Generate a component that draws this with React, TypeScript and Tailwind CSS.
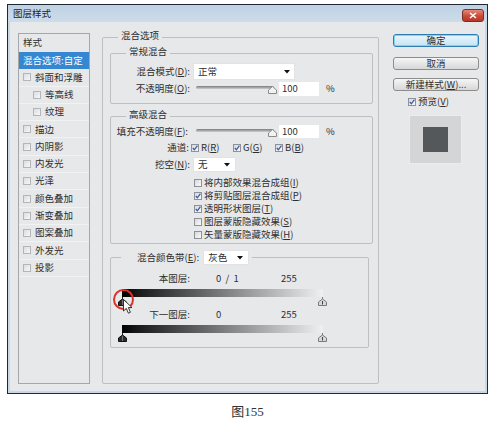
import React from "react";

function Chk({ on = false }: { on?: boolean }) {
  return (
    <span className="relative inline-block w-[8px] h-[8px] shrink-0 border border-[#8e9196] bg-[linear-gradient(135deg,#d6d8db,#fbfbfb)]">
      {on && (
        <svg viewBox="0 0 6 6" className="absolute left-0 top-0 w-[6px] h-[6px]">
          <path d="M0.8 3 L2.4 4.8 L5.4 0.6" stroke="#3a5fa6" strokeWidth="1.3" fill="none" />
        </svg>
      )}
    </span>
  );
}

function ListChk() {
  return (
    <span className="inline-block w-[8px] h-[8px] shrink-0 border border-[#b3b5b8] bg-[linear-gradient(135deg,#dcdde0,#f7f7f8)]" />
  );
}

function Arrow() {
  return (
    <svg width="6" height="4" viewBox="0 0 6 4" className="shrink-0">
      <path d="M0 0 L6 0 L3 3.5 Z" fill="#111" />
    </svg>
  );
}

function Slider() {
  return (
    <div className="relative w-[81px] h-[10px] shrink-0">
      <div className="absolute left-0 right-[3px] top-[2px] h-[3px] rounded-full bg-[linear-gradient(to_bottom,#7b7b7b,#cfcfcf)]" />
      <svg className="absolute right-0 top-[2px]" width="9" height="8" viewBox="0 0 9 8">
        <path d="M4.5 0.5 L8.5 4 L8.5 7.5 L0.5 7.5 L0.5 4 Z" fill="#f2f2f2" stroke="#8a8a8a" />
      </svg>
    </div>
  );
}

function ThumbDark() {
  return (
    <svg width="9" height="9" viewBox="0 0 9 9" className="shrink-0">
      <line x1="4.5" y1="0" x2="4.5" y2="2" stroke="#222" />
      <path d="M4.5 2 L8.5 5 L8.5 8.5 L0.5 8.5 L0.5 5 Z" fill="#2a2a2a" stroke="#111" />
      <line x1="4.5" y1="3" x2="4.5" y2="8" stroke="#777" />
    </svg>
  );
}

function ThumbLight() {
  return (
    <svg width="9" height="9" viewBox="0 0 9 9" className="shrink-0">
      <line x1="4.5" y1="0" x2="4.5" y2="2" stroke="#777" />
      <path d="M4.5 2 L8.5 5 L8.5 8.5 L0.5 8.5 L0.5 5 Z" fill="#d8d8d8" stroke="#7a7a7a" />
      <line x1="4.5" y1="4" x2="4.5" y2="7.5" stroke="#444" />
    </svg>
  );
}

const listItems: { t: string; lvl: number }[] = [
  { t: "斜面和浮雕", lvl: 1 },
  { t: "等高线", lvl: 2 },
  { t: "纹理", lvl: 2 },
  { t: "描边", lvl: 1 },
  { t: "内阴影", lvl: 1 },
  { t: "内发光", lvl: 1 },
  { t: "光泽", lvl: 1 },
  { t: "颜色叠加", lvl: 1 },
  { t: "渐变叠加", lvl: 1 },
  { t: "图案叠加", lvl: 1 },
  { t: "外发光", lvl: 1 },
  { t: "投影", lvl: 1 },
];

const checks: { t: string; k: string; on: boolean }[] = [
  { t: "将内部效果混合成组(", k: "I", on: false },
  { t: "将剪贴图层混合成组(", k: "P", on: true },
  { t: "透明形状图层(", k: "T", on: true },
  { t: "图层蒙版隐藏效果(", k: "S", on: false },
  { t: "矢量蒙版隐藏效果(", k: "H", on: false },
];

export default function App() {
  return (
    <div className="w-[495px] h-[423px] bg-white overflow-hidden pt-[4px] pl-[7px] font-['Noto_Sans_CJK_SC','Noto_Sans',sans-serif] text-[9.5px] text-[#2e2e2e]">
      {/* window */}
      <div className="w-[481px] h-[390px] border border-[#1d2a34] bg-[#c8d8e7] flex flex-col">
        {/* title bar */}
        <div className="h-[17px] shrink-0 flex items-center pl-[5px] pr-[3px] bg-[linear-gradient(to_bottom,#bfd1e3,#cddcea)]">
          <span className="leading-none text-[#222]">图层样式</span>
          <div className="ml-auto mt-[3px] w-[22px] h-[13px] rounded-[3px] border border-[#7c2e25] bg-[linear-gradient(to_bottom,#e48a78,#c94a36_55%,#b8382a)] flex items-center justify-center">
            <svg width="8" height="7" viewBox="0 0 8 7">
              <path d="M1 1 L7 6 M7 1 L1 6" stroke="#fff" strokeWidth="1.6" />
            </svg>
          </div>
        </div>
        {/* body */}
        <div className="flex-1 mx-[2px] mb-[2px] bg-[#e7e8ea] flex items-start">
          {/* style list */}
          <div className="ml-[8px] mt-[11px] w-[72px] h-[351px] border border-[#a4a7ab] flex flex-col">
            <div className="h-[18px] flex items-center pl-[4px] leading-none">样式</div>
            <div className="h-[17.3px] flex items-center pl-[4px] bg-[#3587d2] text-white leading-none">混合选项:自定</div>
            {listItems.map((it) => (
              <div
                key={it.t}
                className={
                  it.lvl === 1
                    ? "h-[17.3px] flex items-center pl-[4px] gap-[4px] border-b border-[#f1f2f3] leading-none"
                    : "h-[17.3px] flex items-center pl-[14px] gap-[4px] border-b border-[#f1f2f3] leading-none"
                }
              >
                <ListChk />
                <span>{it.t}</span>
              </div>
            ))}
          </div>

          {/* main group */}
          <fieldset className="ml-[12px] mt-[7px] w-[277px] h-[355px] border border-[#bcbfc3] rounded-[2px]">
            <legend className="ml-[15px] px-[3px] leading-[12px] pb-[4px]">混合选项</legend>

            {/* 常规混合 */}
            <fieldset className="ml-[7px] w-[263px] border border-[#bcbfc3] rounded-[2px] pb-[6px]">
              <legend className="ml-[15px] px-[3px] leading-[12px] pb-[4px]">常规混合</legend>
              <div className="mt-[2px] h-[17px] flex items-center">
                <span className="w-[79px] text-right leading-none">
                  混合模式(<span className="underline">D</span>):
                </span>
                <div className="ml-[3px] w-[102px] h-[17px] bg-white border border-[#e2e3e5] flex items-center pl-[4px] pr-[4px] leading-none">
                  <span>正常</span>
                  <span className="ml-auto">
                    <Arrow />
                  </span>
                </div>
              </div>
              <div className="mt-[1px] h-[16px] flex items-center">
                <span className="w-[79px] text-right leading-none">
                  不透明度(<span className="underline">O</span>):
                </span>
                <div className="ml-[6px]">
                  <Slider />
                </div>
                <div className="ml-[2px] w-[40px] h-[14px] bg-white flex items-center pl-[3px] leading-none">100</div>
                <span className="ml-[7px] leading-none">%</span>
              </div>
            </fieldset>

            {/* 高级混合 */}
            <fieldset className="mt-[4px] ml-[7px] w-[263px] border border-[#bcbfc3] rounded-[2px] pb-[2px]">
              <legend className="ml-[15px] px-[3px] leading-[12px] pb-[4px]">高级混合</legend>
              <div className="h-[15px] flex items-center">
                <span className="w-[77px] text-right leading-none">
                  填充不透明度(<span className="underline">F</span>):
                </span>
                <div className="ml-[8px]">
                  <Slider />
                </div>
                <div className="ml-[2px] w-[40px] h-[13px] bg-white flex items-center pl-[3px] leading-none">100</div>
                <span className="ml-[7px] leading-none">%</span>
              </div>
              <div className="mt-[2px] h-[14px] flex items-center">
                <span className="w-[78px] text-right leading-none">通道:</span>
                <div className="ml-[2px] w-[42px] flex items-center gap-[2px] leading-none">
                  <Chk on />
                  <span>
                    R(<span className="underline">R</span>)
                  </span>
                </div>
                <div className="w-[42px] flex items-center gap-[2px] leading-none">
                  <Chk on />
                  <span>
                    G(<span className="underline">G</span>)
                  </span>
                </div>
                <div className="flex items-center gap-[2px] leading-none">
                  <Chk on />
                  <span>
                    B(<span className="underline">B</span>)
                  </span>
                </div>
              </div>
              <div className="mt-[2px] h-[15px] flex items-center">
                <span className="w-[79px] text-right leading-none">
                  挖空(<span className="underline">N</span>):
                </span>
                <div className="ml-[3px] w-[43px] h-[15px] bg-white border border-[#e2e3e5] flex items-center pl-[4px] pr-[5px] leading-none">
                  <span>无</span>
                  <span className="ml-auto">
                    <Arrow />
                  </span>
                </div>
              </div>
              <div className="mt-[4px] flex flex-col">
                {checks.map((c) => (
                  <div key={c.k} className="h-[13px] pl-[83px] flex items-center gap-[2px] leading-none">
                    <Chk on={c.on} />
                    <span>
                      {c.t}
                      <span className="underline">{c.k}</span>)
                    </span>
                  </div>
                ))}
              </div>
            </fieldset>

            {/* 混合颜色带 */}
            <fieldset className="mt-[6px] ml-[7px] w-[259px] border border-[#bcbfc3] rounded-[2px] pb-[5px]">
              <legend className="ml-[10px] pl-[16px] pr-[3px]">
                <div className="h-[15px] flex items-center leading-none">
                  <span>
                    混合颜色带(<span className="underline">E</span>):
                  </span>
                  <div className="ml-[4px] w-[46px] h-[15px] bg-white border border-[#e2e3e5] flex items-center pl-[4px] pr-[5px]">
                    <span>灰色</span>
                    <span className="ml-auto">
                      <Arrow />
                    </span>
                  </div>
                </div>
              </legend>

              <div className="mt-[8px] h-[12px] flex items-center leading-none">
                <span className="w-[79px] text-right">本图层:</span>
                <span className="ml-[26px] w-[65px] whitespace-pre">0  /  1</span>
                <span>255</span>
              </div>
              <div className="mt-[4px] ml-[11px] w-[201px] h-[8px] bg-[linear-gradient(to_right,#000,#1a1a1a_8%,#f0f0f0)]" />
              <div className="relative ml-[7px] w-[209px] h-[9px] flex justify-between">
                <ThumbDark />
                <ThumbLight />
                <div className="absolute left-[-5px] top-[-8px] w-[21px] h-[21px] rounded-full border-2 border-[#d8342c]" />
                <svg className="absolute left-[5px] top-[2px]" width="11" height="16" viewBox="0 0 11 16">
                  <path d="M0.5 0.5 L0.5 12 L3.3 9.4 L5.4 14.2 L7.4 13.3 L5.4 8.6 L9 8.6 Z" fill="#fff" stroke="#222" strokeWidth="0.9" />
                </svg>
              </div>

              <div className="mt-[3px] h-[12px] flex items-center leading-none">
                <span className="w-[79px] text-right">下一图层:</span>
                <span className="ml-[26px] w-[65px]">0</span>
                <span>255</span>
              </div>
              <div className="mt-[4px] ml-[11px] w-[201px] h-[8px] bg-[linear-gradient(to_right,#000,#1a1a1a_8%,#f0f0f0)]" />
              <div className="ml-[7px] w-[209px] h-[9px] flex justify-between">
                <ThumbDark />
                <ThumbLight />
              </div>
            </fieldset>
          </fieldset>

          {/* right column */}
          <div className="ml-[14px] mt-[12px] w-[86px] flex flex-col">
            <div className="h-[13px] rounded-[3px] border border-[#2f7db0] bg-[linear-gradient(to_bottom,#e9f6fd,#c6e4f4)] shadow-[inset_0_0_0_1px_#86d3f0] flex items-center justify-center leading-none">
              确定
            </div>
            <div className="mt-[10px] h-[13px] rounded-[3px] border border-[#8c8c8c] bg-[linear-gradient(to_bottom,#f6f6f6,#e6e6e6_50%,#d7d7d7)] flex items-center justify-center leading-none">
              取消
            </div>
            <div className="mt-[8px] h-[13px] rounded-[3px] border border-[#8c8c8c] bg-[linear-gradient(to_bottom,#f6f6f6,#e6e6e6_50%,#d7d7d7)] flex items-center justify-center leading-none">
              新建样式(<span className="underline">W</span>)...
            </div>
            <div className="mt-[6px] h-[10px] pl-[15px] flex items-center gap-[2px] leading-none">
              <Chk on />
              <span>
                预览(<span className="underline">V</span>)
              </span>
            </div>
            <div className="mt-[8px] ml-[16px] w-[53px] h-[49px] bg-[#d4d5d7] border border-[#ececee] flex items-center justify-center">
              <div className="w-[25px] h-[25px] bg-[#55585b]" />
            </div>
          </div>
        </div>
      </div>

      <div className="mt-[10px] w-[481px] text-center text-[13px] leading-[16px] text-[#333] font-['Liberation_Serif','Noto_Sans_CJK_SC',serif]">
        图155
      </div>
    </div>
  );
}
